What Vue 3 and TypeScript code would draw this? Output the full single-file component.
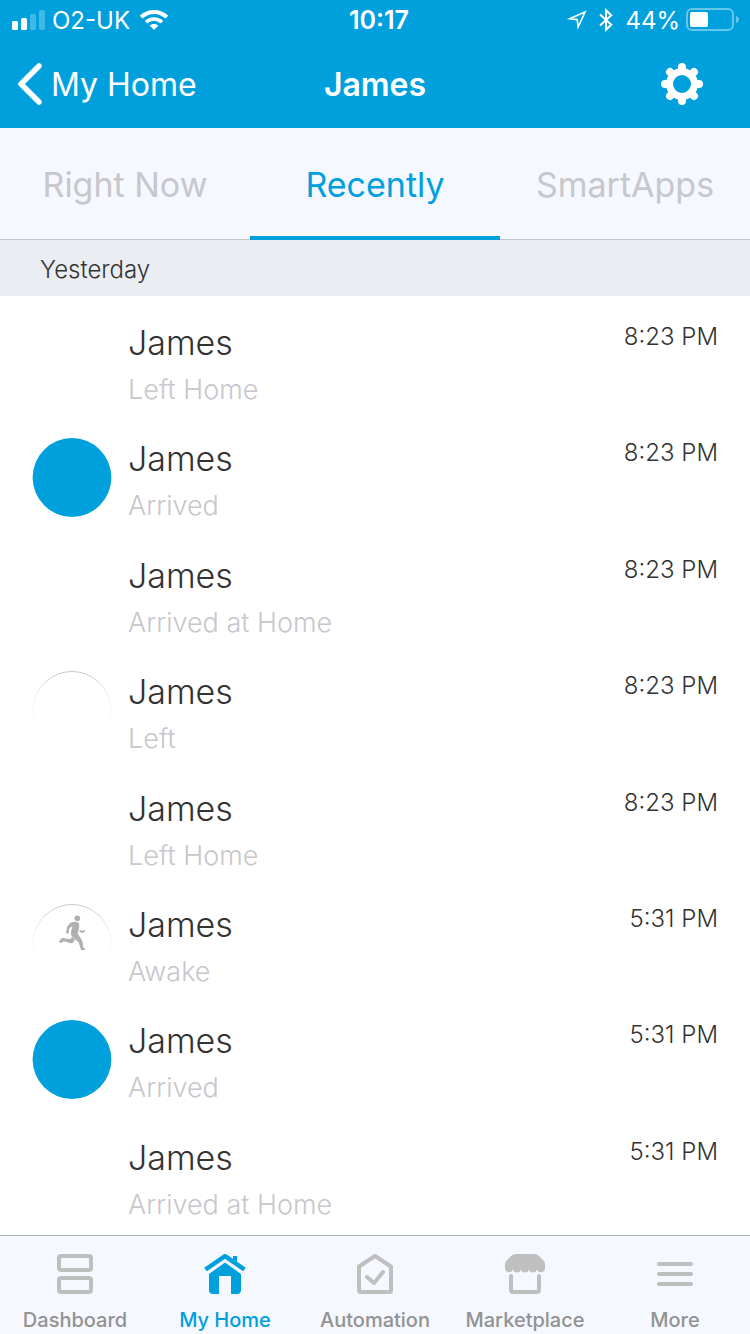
<script setup lang="ts">
import { ref } from 'vue'

type Marker = 'none' | 'present' | 'away' | 'running'

interface ActivityEvent {
  id: number
  name: string
  detail: string
  time: string
  marker: Marker
}

const tabs = ['Right Now', 'Recently', 'SmartApps']
const activeTab = ref('Recently')

const events: ActivityEvent[] = [
  { id: 1, name: 'James', detail: 'Left Home', time: '8:23 PM', marker: 'none' },
  { id: 2, name: 'James', detail: 'Arrived', time: '8:23 PM', marker: 'present' },
  { id: 3, name: 'James', detail: 'Arrived at Home', time: '8:23 PM', marker: 'none' },
  { id: 4, name: 'James', detail: 'Left', time: '8:23 PM', marker: 'away' },
  { id: 5, name: 'James', detail: 'Left Home', time: '8:23 PM', marker: 'none' },
  { id: 6, name: 'James', detail: 'Awake', time: '5:31 PM', marker: 'running' },
  { id: 7, name: 'James', detail: 'Arrived', time: '5:31 PM', marker: 'present' },
  { id: 8, name: 'James', detail: 'Arrived at Home', time: '5:31 PM', marker: 'none' },
]

const sections = ['Dashboard', 'My Home', 'Automation', 'Marketplace', 'More']
const activeSection = ref('My Home')

const gearAngles = [0, 45, 90, 135, 180, 225, 270, 315]
</script>

<template>
  <div class="screen">
    <header class="top">
      <div class="status">
        <div class="status-side">
          <svg class="signal" width="34" height="20" viewBox="0 0 34 20" fill="#fff" aria-hidden="true">
            <rect x="0" y="11" width="6" height="9" rx="1.5" />
            <rect x="9" y="8" width="6" height="12" rx="1.5" />
            <rect x="18" y="4" width="6" height="16" rx="1.5" opacity=".25" />
            <rect x="27" y="0" width="6" height="20" rx="1.5" opacity=".25" />
          </svg>
          <span class="carrier">O2-UK</span>
          <svg width="28" height="20" viewBox="0 0 28 20" fill="none" stroke="#fff" aria-hidden="true">
            <path d="M1.2 7.2C8.3 .2 19.7 .2 26.8 7.2" stroke-width="4" />
            <path d="M6 12.2C10.5 7.9 17.5 7.9 22 12.2" stroke-width="3.6" />
            <path d="M14 20L9.6 15.6C12 13.4 16 13.4 18.4 15.6Z" fill="#fff" stroke="none" />
          </svg>
        </div>
        <span class="clock">10:17</span>
        <div class="status-side end">
          <svg width="20" height="20" viewBox="0 0 20 20" fill="none" stroke="#fff" stroke-width="1.6" aria-hidden="true">
            <path d="M18 2L2.5 8.8L10.2 9.6L11.2 17Z" />
          </svg>
          <svg class="bluetooth" width="14" height="24" viewBox="0 0 14 24" fill="none" stroke="#fff" stroke-width="2" aria-hidden="true">
            <path d="M1 6.5L12.3 16.8L7 21.8V2.2L12.3 7.2L1 17.5" />
          </svg>
          <span>44%</span>
          <svg class="battery" width="54" height="24" viewBox="0 0 54 24" aria-hidden="true">
            <rect x="1" y="1" width="46" height="21" rx="5" fill="none" stroke="#fff" stroke-width="2" opacity=".4" />
            <rect x="4" y="4" width="18" height="15" rx="2" fill="#fff" />
            <path d="M50 8C54 9 54 14 50 15Z" fill="#fff" opacity=".4" />
          </svg>
        </div>
      </div>

      <div class="navbar">
        <button type="button" class="back">
          <svg width="26" height="42" viewBox="0 0 26 42" fill="none" stroke="#fff" stroke-width="5.5" stroke-linecap="round" stroke-linejoin="round" aria-hidden="true">
            <path d="M22 3L4 21L22 39" />
          </svg>
          <span>My Home</span>
        </button>
        <h1>James</h1>
        <button type="button" class="settings" aria-label="Settings">
          <svg width="42" height="42" viewBox="-21 -21 42 42" fill="none" stroke="#fff" aria-hidden="true">
            <circle r="12.5" stroke-width="7" />
            <path v-for="angle in gearAngles" :key="angle" d="M0 -14V-17" stroke-width="8" stroke-linecap="round" :transform="`rotate(${angle})`" />
          </svg>
        </button>
      </div>
    </header>

    <nav class="tabs" aria-label="Views">
      <button
        v-for="tab in tabs"
        :key="tab"
        type="button"
        class="tab"
        :class="{ active: tab === activeTab }"
        @click="activeTab = tab"
      >
        {{ tab }}
      </button>
    </nav>

    <main class="activity">
      <h2>Yesterday</h2>
      <ul>
        <li v-for="event in events" :key="event.id">
          <div class="marker">
            <svg v-if="event.marker !== 'none'" width="80" height="80" viewBox="0 0 80 80" aria-hidden="true">
              <defs>
                <linearGradient :id="`fade-${event.id}`" gradientUnits="userSpaceOnUse" x1="0" y1="0" x2="0" y2="54">
                  <stop offset="0" stop-color="#c4c4c4" />
                  <stop offset=".4" stop-color="#ececec" />
                  <stop offset="1" stop-color="#fff" />
                </linearGradient>
              </defs>
              <circle v-if="event.marker === 'present'" cx="40" cy="39.5" r="39.4" fill="#00a0dd" />
              <circle v-else cx="40" cy="39.5" r="39" fill="none" :stroke="`url(#fade-${event.id})`" />
              <svg v-if="event.marker === 'running'" x="26" y="11" width="28" height="36" viewBox="114 76 84 108" fill="#b0b0b0">
                <circle cx="172" cy="86" r="8.5" />
                <path d="M151 100Q162 93 173 98Q179 101 178 110L173 133L184 148Q187 152 188 160L190 173L195 177V181H183L176 158L158 142Q151 136 153 128L157 110L148 116L146 130Q142 134 138 129L141 113Q143 107 151 100Z" />
                <path d="M156 141L164 149Q162 161 152 161L132 155L122 160L117 157L123 147Q126 144 132 146L151 149Z" />
                <path d="M179 120L186 124L193 121L195 126L187 130L179 126Z" />
              </svg>
            </svg>
          </div>
          <div class="text">
            <h3>{{ event.name }}</h3>
            <p>{{ event.detail }}</p>
          </div>
          <time>{{ event.time }}</time>
        </li>
      </ul>
    </main>

    <nav class="sections" aria-label="Sections">
      <button
        v-for="section in sections"
        :key="section"
        type="button"
        :class="{ active: section === activeSection }"
        @click="activeSection = section"
      >
        <svg width="42" height="42" viewBox="0 0 42 42" fill="none" stroke="currentColor" stroke-width="4" stroke-linejoin="round" stroke-linecap="round" aria-hidden="true">
          <g v-if="section === 'Dashboard'">
            <rect x="5" y="3" width="32" height="14" rx="2" />
            <rect x="5" y="25" width="32" height="14" rx="2" />
          </g>
          <g v-else-if="section === 'My Home'">
            <path d="M1.5 16.5L21 3.2L40.5 16.5" stroke-width="4.5" stroke-linecap="butt" />
            <path d="M29 3H33V12L29 9Z" fill="currentColor" stroke="none" />
            <path d="M5 21L21 9.5L37 21V37Q37 41 33 41H27V23H15V41H9Q5 41 5 37Z" fill="currentColor" stroke="none" />
          </g>
          <g v-else-if="section === 'Automation'">
            <path d="M21 3L37 13.5V37.5Q37 39 35.5 39H6.5Q5 39 5 37.5V13.5Z" />
            <path d="M13 24L20 30L29 19" />
          </g>
          <g v-else-if="section === 'Marketplace'">
            <path d="M12 1H30Q33 1 35 3L39 7Q41 9 41 11V15A4 4 0 0 1 33 15.5A4 4 0 0 1 25 15.5A4 4 0 0 1 17 15.5A4 4 0 0 1 9 15.5A4 4 0 0 1 1 15V11Q1 9 3 7L7 3Q9 1 12 1Z" fill="currentColor" stroke="none" />
            <path d="M7 23V37Q7 39 9 39H33Q35 39 35 37V23" />
          </g>
          <path v-else d="M5 11H37M5 21H37M5 31H37" />
        </svg>
        <span>{{ section }}</span>
      </button>
    </nav>
  </div>
</template>

<style>
body {
  background: #fff;
}
</style>

<style scoped>
.screen {
  display: flex;
  flex-direction: column;
  min-height: 100vh;
  font-family: Inter, "Liberation Sans", sans-serif;
  color: #333;
}

button {
  padding: 0;
  border: 0;
  background: none;
  color: inherit;
  font: inherit;
  cursor: pointer;
}

svg {
  display: block;
  flex: none;
}

h1,
h2,
h3,
p,
ul {
  margin: 0;
  padding: 0;
}

.top {
  background: #00a0dd;
  color: #fff;
}

.status {
  display: grid;
  grid-template-columns: 1fr auto 1fr;
  align-items: center;
  height: 40px;
  padding: 0 10px 0 12px;
  font-size: 24px;
}

.status-side {
  display: flex;
  align-items: center;
  gap: 6px;
}

.carrier {
  margin-right: 4px;
}

.end {
  justify-content: flex-end;
}

.bluetooth {
  margin: 0 6px;
}

.clock {
  padding-left: 6px;
  font-size: 25px;
  font-weight: 600;
}

.navbar {
  display: grid;
  grid-template-columns: 1fr auto 1fr;
  align-items: center;
  height: 88px;
  padding: 0 47px 0 17px;
}

.back {
  display: flex;
  align-items: center;
  justify-self: start;
  gap: 8px;
  font-size: 32px;
}

h1 {
  padding-left: 30px;
  font-size: 32px;
  font-weight: 600;
}

.settings {
  justify-self: end;
}

.tabs {
  display: grid;
  grid-template-columns: repeat(3, 1fr);
  height: 112px;
  background: #f5f8ff;
}

.tab {
  padding-top: 1px;
  box-shadow: inset 0 -1px #c4c6cc;
  color: #c7c7cc;
  font-size: 34px;
}

.tab.active {
  box-shadow: inset 0 -4px #00a0dd;
  color: #00a0dd;
}

.activity {
  display: flex;
  flex: 1;
  flex-direction: column;
}

h2 {
  padding: 4px 40px 0;
  background: #eaedf2;
  font-size: 24px;
  font-weight: 300;
  line-height: 52px;
}

ul {
  display: grid;
  flex: 1;
  grid-auto-rows: 1fr;
  padding: 0 32px 8px;
  list-style: none;
}

li {
  display: grid;
  grid-template-columns: 80px 1fr auto;
  column-gap: 16px;
  padding-top: 26px;
  font-weight: 300;
}

h3 {
  font-size: 34px;
  font-weight: 300;
  line-height: 42px;
}

p {
  margin-top: 6px;
  color: #c7c7cc;
  font-size: 27px;
  line-height: 40px;
}

time {
  font-size: 24px;
  line-height: 30px;
}

.sections {
  display: grid;
  grid-template-columns: repeat(5, 1fr);
  height: 98px;
  border-top: 1px solid #adadb2;
  background: #f5f8ff;
}

.sections button {
  display: flex;
  flex-direction: column;
  align-items: center;
  padding-top: 17px;
  color: #bfbfbf;
  font-size: 20px;
  font-weight: 500;
  line-height: 50px;
}

.sections span {
  color: #929292;
}

.sections .active,
.sections .active span {
  color: #00a0dd;
}
</style>
